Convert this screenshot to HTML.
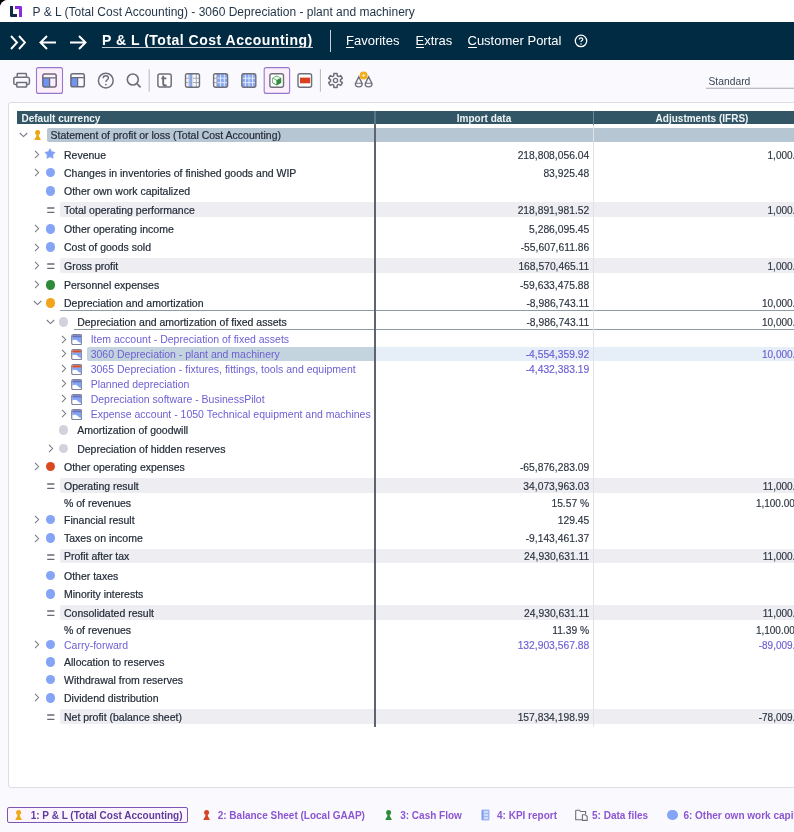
<!DOCTYPE html>
<html><head><meta charset="utf-8">
<style>
*{margin:0;padding:0;box-sizing:border-box}
html,body{width:794px;height:832px;overflow:hidden;background:#000}
body{font-family:"Liberation Sans",sans-serif;position:relative}
.abs{position:absolute}
#win{will-change:transform;position:absolute;left:0;top:0;width:794px;height:832px;background:#fafafe;border-top-left-radius:8px;overflow:hidden}
#titlebar{position:absolute;left:0;top:0;width:794px;height:22px;background:#fff}
#title{position:absolute;left:32.6px;top:5px;font-size:12px;color:#1f3347;white-space:nowrap;line-height:14px}
#nav{position:absolute;left:0;top:22px;width:794px;height:38px;background:#012a43}
.navt{position:absolute;color:#fff;white-space:nowrap;font-size:13px;line-height:15px;top:33px}
#card{position:absolute;left:8px;top:101.8px;width:800px;height:686.5px;background:#fff;border:1px solid #dddbe4;border-radius:3px}
.t{position:absolute;white-space:nowrap;font-size:10.5px;line-height:12px;color:#2f3744;-webkit-text-stroke:0.2px currentColor}
.n{position:absolute;white-space:nowrap;font-size:10.3px;line-height:12px;color:#3a424e;text-align:right;-webkit-text-stroke:0.15px currentColor}
.tab{position:absolute;white-space:nowrap;font-size:10px;font-weight:bold;line-height:12px;color:#8c56d2;top:810px}
.ico{position:absolute}
</style></head><body>
<div id="win">
 <div id="titlebar">
  <svg class="abs" style="left:10px;top:6px" width="12" height="11" viewBox="0 0 12 11">
   <path d="M0 0h3v8h4v3H1.2Q0 11 0 9.8Z" fill="#102a43"/>
   <path d="M5 0h5.8Q12 0 12 1.2V11H9V3H5Z" fill="#8a2be2"/>
  </svg>
  <div id="title">P &amp; L (Total Cost Accounting) - 3060 Depreciation - plant and machinery</div>
 </div>
 <div id="nav"></div>
 <!-- nav icons -->
 <svg class="abs" style="left:10px;top:34.5px" width="16" height="15" viewBox="0 0 16 15">
  <path d="M1 1L7 7.5L1 14M9 1L15 7.5L9 14" fill="none" stroke="#fff" stroke-width="1.9"/>
 </svg>
 <svg class="abs" style="left:39px;top:34.5px" width="17" height="15" viewBox="0 0 17 15">
  <path d="M8 1L1.5 7.5L8 14M1.5 7.5H17" fill="none" stroke="#fff" stroke-width="2"/>
 </svg>
 <svg class="abs" style="left:70px;top:34.5px" width="17" height="15" viewBox="0 0 17 15">
  <path d="M9 1L15.5 7.5L9 14M15.5 7.5H0" fill="none" stroke="#fff" stroke-width="2"/>
 </svg>
 <div class="navt" style="left:102px;top:32px;font-size:14px;font-weight:bold;letter-spacing:0.5px;line-height:16px">P &amp; L (Total Cost Accounting)</div>
 <div class="abs" style="left:102px;top:47px;width:211px;height:1.3px;background:#c5ccd4"></div>
 <div class="abs" style="left:330px;top:30px;width:1px;height:22px;background:#c8ced6"></div>
 <div class="navt" style="left:346px">Favorites</div>
 <div class="abs" style="left:346px;top:46.5px;width:8px;height:1px;background:#fff"></div>
 <div class="navt" style="left:415.5px">Extras</div>
 <div class="abs" style="left:415.5px;top:46.5px;width:8px;height:1px;background:#fff"></div>
 <div class="navt" style="left:467.5px">Customer Portal</div>
 <div class="abs" style="left:467.5px;top:46.5px;width:9px;height:1px;background:#fff"></div>
 <svg class="abs" style="left:573.5px;top:34px" width="14" height="14" viewBox="0 0 14 14">
  <circle cx="7" cy="6.9" r="5.7" fill="none" stroke="#fff" stroke-width="1.3"/>
  <path d="M5.2 5.5Q5.2 3.8 7 3.8Q8.8 3.8 8.8 5.3Q8.8 6.2 7.6 6.8Q7 7.1 7 8.1" fill="none" stroke="#fff" stroke-width="1.2"/>
  <circle cx="7" cy="9.9" r="0.75" fill="#fff"/>
 </svg>
  <!-- toolbar -->
 <svg class="abs" style="left:0;top:60px" width="794" height="42" viewBox="0 60 794 42">
  <g fill="none" stroke="#6f6f7c" stroke-width="1.5" stroke-linejoin="round">
   <!-- printer -->
   <path d="M17.2 76.8V74.2Q17.2 73.6 17.8 73.6H25.8Q26.4 73.6 26.4 74.2V76.8"/>
   <path d="M16.6 84.4H15.2Q13.8 84.4 13.8 83V79Q13.8 77.2 15.6 77.2H27.8Q29.4 77.2 29.4 79V83Q29.4 84.4 28 84.4H26.8"/>
   <path d="M16.8 82.4H26.6V86.4Q26.6 87.1 25.9 87.1H17.5Q16.8 87.1 16.8 86.4Z"/>
  </g>
  <!-- active box 1 -->
  <rect x="36.5" y="67.6" width="26" height="25.8" rx="2" fill="#fdeefb" stroke="#9479cf" stroke-width="1.1"/>
  <!-- layout icon 1 -->
  <rect x="43" y="78" width="6.5" height="9" fill="#6f95ef"/>
  <rect x="42.8" y="74.1" width="13.4" height="12.8" rx="1.8" fill="none" stroke="#6b6b7a" stroke-width="1.5"/>
  <path d="M42.8 77.8H56.2M49.6 77.8V86.9" stroke="#6b6b7a" stroke-width="1.3"/>
  <!-- layout icon 2 -->
  <rect x="71" y="78" width="6.5" height="9" fill="#6f95ef"/>
  <rect x="70.9" y="73.8" width="13.4" height="13" rx="1.8" fill="none" stroke="#6b6b7a" stroke-width="1.5"/>
  <path d="M70.9 77.6H84.3M77.6 77.6V86.8" stroke="#6b6b7a" stroke-width="1.3"/>
  <!-- help -->
  <circle cx="105.8" cy="80.6" r="7.4" fill="none" stroke="#6f6f7c" stroke-width="1.5"/>
  <path d="M103.2 78.3Q103.2 75.8 105.8 75.8Q108.4 75.8 108.4 78.1Q108.4 79.4 106.9 80.1Q105.9 80.6 105.9 82" fill="none" stroke="#6f6f7c" stroke-width="1.4"/>
  <circle cx="105.9" cy="84.6" r="0.9" fill="#6f6f7c"/>
  <!-- search -->
  <circle cx="132.8" cy="79.5" r="5.5" fill="none" stroke="#6f6f7c" stroke-width="1.6"/>
  <path d="M136.9 83.6L140.6 87.3" stroke="#6f6f7c" stroke-width="1.7"/>
  <!-- sep -->
  <path d="M149.2 69.2V91.7" stroke="#b4b4c0" stroke-width="1"/>
  <!-- t box -->
  <rect x="157.9" y="74.1" width="13.3" height="12.8" rx="1.8" fill="#fff" stroke="#6f6f7c" stroke-width="1.5"/>
  <path d="M163.2 75.8V83.6Q163.2 85.5 165 85.5Q166 85.5 166.6 85.2M161.3 78.4H166.4" fill="none" stroke="#6b6b7a" stroke-width="1.9"/>
  <!-- grid 1 -->
  <rect x="189" y="73.8" width="3.6" height="13.3" fill="#88a9f0"/>
  <!-- grid 2 -->
  <rect x="217" y="73.8" width="10.3" height="13.3" fill="#88a9f0"/>
  <!-- grid 3 -->
  <rect x="242" y="73.8" width="13.3" height="13.3" fill="#88a9f0"/>
  <g stroke-width="0.9">
   <path d="M188.9 74V87M192.6 74V87M196.3 74V87M185.5 78.2H199.5M185.5 82.6H199.5" stroke="#9a9aa6"/>
   <path d="M188.9 74V87M192.6 74V87" stroke="#e0e8fa"/>
   <path d="M220.6 74V87M224.3 74V87M217 78.2H227.5M217 82.6H227.5" stroke="#e8eefc"/>
   <path d="M216.9 74V87M213.5 78.2H216.9M213.5 82.6H216.9" stroke="#9a9aa6"/>
   <path d="M245.4 74V87M249 74V87M252.6 74V87M242 78.2H255.5M242 82.6H255.5" stroke="#e8eefc"/>
  </g>
  <rect x="185.5" y="73.8" width="14" height="13.4" rx="2" fill="none" stroke="#6f6f7c" stroke-width="1.4"/>
  <rect x="213.6" y="73.8" width="14" height="13.4" rx="2" fill="none" stroke="#6f6f7c" stroke-width="1.4"/>
  <rect x="241.8" y="73.8" width="14" height="13.4" rx="2" fill="none" stroke="#6f6f7c" stroke-width="1.4"/>
  <!-- active box 2 -->
  <rect x="264.2" y="67.6" width="25.4" height="25.8" rx="2" fill="#fdeefb" stroke="#9479cf" stroke-width="1.1"/>
  <rect x="269.9" y="73.8" width="13.6" height="13.4" rx="2" fill="#fff" stroke="#6f6f7c" stroke-width="1.4"/>
  <!-- cube -->
  <path d="M276.7 75.6L281.2 78V83L276.7 85.4L272.3 83V78Z" fill="#2f8c3a"/>
  <path d="M272.9 78.6L276.4 80.4V84.4L272.9 82.5Z" fill="#fff"/>
  <path d="M273 78.1L276.7 76.2L280.5 78.1L276.7 80Z" fill="#eaf6ea"/>
  <!-- red bar icon -->
  <rect x="298" y="73.8" width="13.6" height="13.4" rx="2" fill="#fff" stroke="#6f6f7c" stroke-width="1.4"/>
  <rect x="300" y="77.6" width="10.2" height="5.7" fill="#da3f1f"/>
  <!-- sep -->
  <path d="M320.4 69.2V91.7" stroke="#b4b4c0" stroke-width="1"/>
  <!-- gear -->
  <path d="M333.71 75.83 L333.88 73.48 L337.12 73.48 L337.29 75.83 L338.65 76.61 L340.77 75.59 L342.39 78.39 L340.44 79.72 L340.44 81.28 L342.39 82.61 L340.77 85.41 L338.65 84.39 L337.29 85.17 L337.12 87.52 L333.88 87.52 L333.71 85.17 L332.35 84.39 L330.23 85.41 L328.61 82.61 L330.56 81.28 L330.56 79.72 L328.61 78.39 L330.23 75.59 L332.35 76.61Z" fill="none" stroke="#6f6f7c" stroke-width="1.5" stroke-linejoin="round"/>
  <circle cx="335.5" cy="80.5" r="2.1" fill="none" stroke="#6f6f7c" stroke-width="1.3"/>
  <!-- balance -->
  <g fill="none" stroke="#6f6f7c" stroke-width="1.4">
   <path d="M358.8 76.8L355.4 83.6Q355.2 86.9 358.8 86.9Q362.3 86.9 362.2 83.6Z"/>
   <path d="M368.6 76.8L365.2 83.6Q365 86.9 368.6 86.9Q372.1 86.9 372 83.6Z"/>
   <path d="M355.6 83.3H362M365.4 83.3H371.8" stroke-width="1.1"/>
  </g>
  <circle cx="363.6" cy="75.4" r="4" fill="#f0ad1c"/>
  <path d="M362 75.4H365.2M363.6 73.8V77" stroke="#fff3c8" stroke-width="0.9"/>
  <!-- standard -->
  <text x="708.5" y="84.6" font-family="Liberation Sans" font-size="10.3" fill="#3c4656">Standard</text>
  <path d="M706 88.3H794" stroke="#a8a8b2" stroke-width="1.1"/>
 </svg>

 <div id="card"></div>
 <div class="abs" style="left:17px;top:111px;width:790px;height:13px;background:#325666"></div>
 <div class="abs" style="left:21.5px;top:113.2px;font-size:10px;font-weight:bold;color:#eef3f6;line-height:12px;white-space:nowrap">Default currency</div>
 <div class="abs" style="left:375px;top:113.2px;width:218px;text-align:center;font-size:10px;font-weight:bold;color:#eef3f6;line-height:12px;white-space:nowrap">Import data</div>
 <div class="abs" style="left:593px;top:113.2px;width:218px;text-align:center;font-size:10px;font-weight:bold;color:#eef3f6;line-height:12px;white-space:nowrap">Adjustments (IFRS)</div>
 <div class="abs" style="left:47.0px;top:128px;width:328.0px;height:14px;background:#b6c6d3;border-radius:2px 0 0 2px"></div>
<div class="abs" style="left:375.0px;top:128px;width:440px;height:14px;background:#b6c6d3"></div>
<svg class="abs" style="left:19.2px;top:132.3px" width="9" height="6" viewBox="0 0 9 6"><path d="M0.8 1L4.5 4.6L8.2 1" fill="none" stroke="#767984" stroke-width="1.05"/></svg>
<svg class="abs" style="left:33.6px;top:129.7px" width="8" height="11" viewBox="0 0 8 11"><circle cx="3.6" cy="2.6" r="2.5" fill="#f0a514"/><path d="M2.6 4.2L2.1 6.8Q0.5 8.4 0.4 10.1H6.8Q6.7 8.4 5.1 6.8L4.6 4.2Z" fill="#f0a514"/></svg>
<div class="t" style="left:50.5px;top:129.4px;color:#232c38">Statement of profit or loss (Total Cost Accounting)</div>
<svg class="abs" style="left:34.2px;top:150.1px" width="6" height="9" viewBox="0 0 6 9"><path d="M1 0.8L4.6 4.5L1 8.2" fill="none" stroke="#767984" stroke-width="1.05"/></svg>
<svg class="abs" style="left:44.3px;top:147.6px" width="12" height="12" viewBox="0 0 12 12"><path d="M6.00 0.70 L7.68 3.69 L11.04 4.36 L8.71 6.88 L9.12 10.29 L6.00 8.85 L2.88 10.29 L3.29 6.88 L0.96 4.36 L4.32 3.69Z" fill="#809ff4" stroke="#809ff4" stroke-width="0.7" stroke-linejoin="round"/></svg>
<div class="t" style="left:64.0px;top:149.4px;color:#232c38">Revenue</div>
<div class="n" style="right:204.8px;top:150.1px;color:#2c3440">218,808,056.04</div>
<div class="n" style="right:-12.5px;top:150.1px;color:#2c3440;font-size:10px">1,000.00</div>
<svg class="abs" style="left:34.2px;top:168.1px" width="6" height="9" viewBox="0 0 6 9"><path d="M1 0.8L4.6 4.5L1 8.2" fill="none" stroke="#767984" stroke-width="1.05"/></svg>
<div class="abs" style="left:45.5px;top:167.8px;width:9.6px;height:9.6px;border-radius:50%;background:#84a4f5"></div>
<div class="t" style="left:64.0px;top:167.4px;color:#232c38">Changes in inventories of finished goods and WIP</div>
<div class="n" style="right:204.8px;top:168.1px;color:#2c3440">83,925.48</div>
<div class="abs" style="left:45.5px;top:186.0px;width:9.6px;height:9.6px;border-radius:50%;background:#84a4f5"></div>
<div class="t" style="left:64.0px;top:185.4px;color:#232c38">Other own work capitalized</div>
<div class="abs" style="left:60.4px;top:202.0px;width:739.6px;height:14.5px;background:#ededf2;border-radius:2px 0 0 2px"></div>
<svg class="abs" style="left:46.7px;top:206.8px" width="8" height="7" viewBox="0 0 8 7"><path d="M0.2 1h7.2M0.2 5.3h7.2" stroke="#686877" stroke-width="1.3"/></svg>
<div class="t" style="left:64.0px;top:204.4px;color:#232c38">Total operating performance</div>
<div class="n" style="right:204.8px;top:205.1px;color:#2c3440">218,891,981.52</div>
<div class="n" style="right:-12.5px;top:205.1px;color:#2c3440;font-size:10px">1,000.00</div>
<svg class="abs" style="left:34.2px;top:224.3px" width="6" height="9" viewBox="0 0 6 9"><path d="M1 0.8L4.6 4.5L1 8.2" fill="none" stroke="#767984" stroke-width="1.05"/></svg>
<div class="abs" style="left:45.5px;top:224.0px;width:9.6px;height:9.6px;border-radius:50%;background:#84a4f5"></div>
<div class="t" style="left:64.0px;top:223.4px;color:#232c38">Other operating income</div>
<div class="n" style="right:204.8px;top:224.1px;color:#2c3440">5,286,095.45</div>
<svg class="abs" style="left:34.2px;top:242.6px" width="6" height="9" viewBox="0 0 6 9"><path d="M1 0.8L4.6 4.5L1 8.2" fill="none" stroke="#767984" stroke-width="1.05"/></svg>
<div class="abs" style="left:45.5px;top:242.3px;width:9.6px;height:9.6px;border-radius:50%;background:#84a4f5"></div>
<div class="t" style="left:64.0px;top:241.4px;color:#232c38">Cost of goods sold</div>
<div class="n" style="right:204.8px;top:242.1px;color:#2c3440">-55,607,611.86</div>
<div class="abs" style="left:60.4px;top:258.2px;width:739.6px;height:14.5px;background:#ededf2;border-radius:2px 0 0 2px"></div>
<svg class="abs" style="left:34.2px;top:261.1px" width="6" height="9" viewBox="0 0 6 9"><path d="M1 0.8L4.6 4.5L1 8.2" fill="none" stroke="#767984" stroke-width="1.05"/></svg>
<svg class="abs" style="left:46.7px;top:263.0px" width="8" height="7" viewBox="0 0 8 7"><path d="M0.2 1h7.2M0.2 5.3h7.2" stroke="#686877" stroke-width="1.3"/></svg>
<div class="t" style="left:64.0px;top:260.4px;color:#232c38">Gross profit</div>
<div class="n" style="right:204.8px;top:261.1px;color:#2c3440">168,570,465.11</div>
<div class="n" style="right:-12.5px;top:261.1px;color:#2c3440;font-size:10px">1,000.00</div>
<svg class="abs" style="left:34.2px;top:280.4px" width="6" height="9" viewBox="0 0 6 9"><path d="M1 0.8L4.6 4.5L1 8.2" fill="none" stroke="#767984" stroke-width="1.05"/></svg>
<div class="abs" style="left:45.5px;top:280.1px;width:9.6px;height:9.6px;border-radius:50%;background:#2e8b3a"></div>
<div class="t" style="left:64.0px;top:279.4px;color:#232c38">Personnel expenses</div>
<div class="n" style="right:204.8px;top:280.1px;color:#2c3440">-59,633,475.88</div>
<div class="abs" style="left:60.4px;top:310.2px;width:739.6px;height:1.2px;background:#8d9ca3"></div>
<svg class="abs" style="left:32.5px;top:299.9px" width="9" height="6" viewBox="0 0 9 6"><path d="M0.8 1L4.5 4.6L8.2 1" fill="none" stroke="#767984" stroke-width="1.05"/></svg>
<div class="abs" style="left:45.5px;top:298.1px;width:9.6px;height:9.6px;border-radius:50%;background:#f2a51c"></div>
<div class="t" style="left:64.0px;top:297.4px;color:#232c38">Depreciation and amortization</div>
<div class="n" style="right:204.8px;top:298.1px;color:#2c3440">-8,986,743.11</div>
<div class="n" style="right:-12.5px;top:298.1px;color:#2c3440;font-size:10px">10,000.00</div>
<div class="abs" style="left:73.5px;top:329.3px;width:726.5px;height:1.2px;background:#8d9ca3"></div>
<svg class="abs" style="left:45.8px;top:319.0px" width="9" height="6" viewBox="0 0 9 6"><path d="M0.8 1L4.5 4.6L8.2 1" fill="none" stroke="#767984" stroke-width="1.05"/></svg>
<div class="abs" style="left:58.9px;top:317.2px;width:9.6px;height:9.6px;border-radius:50%;background:#d3d2dc"></div>
<div class="t" style="left:77.2px;top:316.4px;color:#232c38">Depreciation and amortization of fixed assets</div>
<div class="n" style="right:204.8px;top:317.1px;color:#2c3440">-8,986,743.11</div>
<div class="n" style="right:-12.5px;top:317.1px;color:#2c3440;font-size:10px">10,000.00</div>
<svg class="abs" style="left:60.9px;top:334.5px" width="6" height="9" viewBox="0 0 6 9"><path d="M1 0.8L4.6 4.5L1 8.2" fill="none" stroke="#767984" stroke-width="1.05"/></svg>
<svg class="abs" style="left:71.1px;top:334.0px" width="11.4" height="11.2" viewBox="0 0 11.4 11.2"><rect x="0.7" y="0.7" width="10" height="9.9" rx="1.6" fill="#fff" stroke="#80829a" stroke-width="1.2"/><path d="M1.3 3.3H10.1V9Q8.4 8.8 6.9 7.2Q5 4.9 1.3 6.3Z" fill="#82a4f4"/><path d="M1.3 3.6V2.3Q1.3 1.3 2.3 1.3H9.1Q10.1 1.3 10.1 2.3V3.6Z" fill="#6470c0"/></svg>
<div class="t" style="left:90.7px;top:333.4px;color:#6c5fd4;-webkit-text-stroke:0">Item account - Depreciation of fixed assets</div>
<div class="abs" style="left:87.0px;top:347.2px;width:288.0px;height:14px;background:#c4d4de;border-radius:2px 0 0 2px"></div>
<div class="abs" style="left:375.0px;top:347.2px;width:440px;height:14px;background:#e6eef7"></div>
<svg class="abs" style="left:60.9px;top:349.3px" width="6" height="9" viewBox="0 0 6 9"><path d="M1 0.8L4.6 4.5L1 8.2" fill="none" stroke="#767984" stroke-width="1.05"/></svg>
<svg class="abs" style="left:71.1px;top:348.8px" width="11.4" height="11.2" viewBox="0 0 11.4 11.2"><rect x="0.7" y="0.7" width="10" height="9.9" rx="1.6" fill="#fff" stroke="#80829a" stroke-width="1.2"/><path d="M1.3 3.3H10.1V9Q8.4 8.8 6.9 7.2Q5 4.9 1.3 6.3Z" fill="#82a4f4"/><path d="M1.3 3.6V2.3Q1.3 1.3 2.3 1.3H9.1Q10.1 1.3 10.1 2.3V3.6Z" fill="#d4502e"/></svg>
<div class="t" style="left:90.7px;top:348.4px;color:#6c5fd4;-webkit-text-stroke:0">3060 Depreciation - plant and machinery</div>
<div class="n" style="right:204.8px;top:349.1px;color:#6c5fd4">-4,554,359.92</div>
<div class="n" style="right:-12.5px;top:349.1px;color:#6c5fd4;font-size:10px">10,000.00</div>
<svg class="abs" style="left:60.9px;top:364.1px" width="6" height="9" viewBox="0 0 6 9"><path d="M1 0.8L4.6 4.5L1 8.2" fill="none" stroke="#767984" stroke-width="1.05"/></svg>
<svg class="abs" style="left:71.1px;top:363.6px" width="11.4" height="11.2" viewBox="0 0 11.4 11.2"><rect x="0.7" y="0.7" width="10" height="9.9" rx="1.6" fill="#fff" stroke="#80829a" stroke-width="1.2"/><path d="M1.3 3.3H10.1V9Q8.4 8.8 6.9 7.2Q5 4.9 1.3 6.3Z" fill="#82a4f4"/><path d="M1.3 3.6V2.3Q1.3 1.3 2.3 1.3H9.1Q10.1 1.3 10.1 2.3V3.6Z" fill="#d4502e"/></svg>
<div class="t" style="left:90.7px;top:363.4px;color:#6c5fd4;-webkit-text-stroke:0">3065 Depreciation - fixtures, fittings, tools and equipment</div>
<div class="n" style="right:204.8px;top:364.1px;color:#6c5fd4">-4,432,383.19</div>
<svg class="abs" style="left:60.9px;top:379.2px" width="6" height="9" viewBox="0 0 6 9"><path d="M1 0.8L4.6 4.5L1 8.2" fill="none" stroke="#767984" stroke-width="1.05"/></svg>
<svg class="abs" style="left:71.1px;top:378.7px" width="11.4" height="11.2" viewBox="0 0 11.4 11.2"><rect x="0.7" y="0.7" width="10" height="9.9" rx="1.6" fill="#fff" stroke="#80829a" stroke-width="1.2"/><path d="M1.3 3.3H10.1V9Q8.4 8.8 6.9 7.2Q5 4.9 1.3 6.3Z" fill="#82a4f4"/><path d="M1.3 3.6V2.3Q1.3 1.3 2.3 1.3H9.1Q10.1 1.3 10.1 2.3V3.6Z" fill="#6470c0"/></svg>
<div class="t" style="left:90.7px;top:378.4px;color:#6c5fd4;-webkit-text-stroke:0">Planned depreciation</div>
<svg class="abs" style="left:60.9px;top:394.1px" width="6" height="9" viewBox="0 0 6 9"><path d="M1 0.8L4.6 4.5L1 8.2" fill="none" stroke="#767984" stroke-width="1.05"/></svg>
<svg class="abs" style="left:71.1px;top:393.6px" width="11.4" height="11.2" viewBox="0 0 11.4 11.2"><rect x="0.7" y="0.7" width="10" height="9.9" rx="1.6" fill="#fff" stroke="#80829a" stroke-width="1.2"/><path d="M1.3 3.3H10.1V9Q8.4 8.8 6.9 7.2Q5 4.9 1.3 6.3Z" fill="#82a4f4"/><path d="M1.3 3.6V2.3Q1.3 1.3 2.3 1.3H9.1Q10.1 1.3 10.1 2.3V3.6Z" fill="#6470c0"/></svg>
<div class="t" style="left:90.7px;top:393.4px;color:#6c5fd4;-webkit-text-stroke:0">Depreciation software - BusinessPilot</div>
<svg class="abs" style="left:60.9px;top:409.1px" width="6" height="9" viewBox="0 0 6 9"><path d="M1 0.8L4.6 4.5L1 8.2" fill="none" stroke="#767984" stroke-width="1.05"/></svg>
<svg class="abs" style="left:71.1px;top:408.6px" width="11.4" height="11.2" viewBox="0 0 11.4 11.2"><rect x="0.7" y="0.7" width="10" height="9.9" rx="1.6" fill="#fff" stroke="#80829a" stroke-width="1.2"/><path d="M1.3 3.3H10.1V9Q8.4 8.8 6.9 7.2Q5 4.9 1.3 6.3Z" fill="#82a4f4"/><path d="M1.3 3.6V2.3Q1.3 1.3 2.3 1.3H9.1Q10.1 1.3 10.1 2.3V3.6Z" fill="#6470c0"/></svg>
<div class="t" style="left:90.7px;top:408.4px;color:#6c5fd4;-webkit-text-stroke:0">Expense account - 1050 Technical equipment and machines</div>
<div class="abs" style="left:58.9px;top:425.4px;width:9.6px;height:9.6px;border-radius:50%;background:#d3d2dc"></div>
<div class="t" style="left:77.2px;top:424.4px;color:#232c38">Amortization of goodwill</div>
<svg class="abs" style="left:47.5px;top:444.0px" width="6" height="9" viewBox="0 0 6 9"><path d="M1 0.8L4.6 4.5L1 8.2" fill="none" stroke="#767984" stroke-width="1.05"/></svg>
<div class="abs" style="left:58.9px;top:443.7px;width:9.6px;height:9.6px;border-radius:50%;background:#d3d2dc"></div>
<div class="t" style="left:77.2px;top:443.4px;color:#232c38">Depreciation of hidden reserves</div>
<svg class="abs" style="left:34.2px;top:462.0px" width="6" height="9" viewBox="0 0 6 9"><path d="M1 0.8L4.6 4.5L1 8.2" fill="none" stroke="#767984" stroke-width="1.05"/></svg>
<div class="abs" style="left:45.5px;top:461.7px;width:9.6px;height:9.6px;border-radius:50%;background:#d9481f"></div>
<div class="t" style="left:64.0px;top:461.4px;color:#232c38">Other operating expenses</div>
<div class="n" style="right:204.8px;top:462.1px;color:#2c3440">-65,876,283.09</div>
<div class="abs" style="left:60.4px;top:478.3px;width:739.6px;height:14.5px;background:#ededf2;border-radius:2px 0 0 2px"></div>
<svg class="abs" style="left:46.7px;top:483.1px" width="8" height="7" viewBox="0 0 8 7"><path d="M0.2 1h7.2M0.2 5.3h7.2" stroke="#686877" stroke-width="1.3"/></svg>
<div class="t" style="left:64.0px;top:480.4px;color:#232c38">Operating result</div>
<div class="n" style="right:204.8px;top:481.1px;color:#2c3440">34,073,963.03</div>
<div class="n" style="right:-12.5px;top:481.1px;color:#2c3440;font-size:10px">11,000.00</div>
<div class="t" style="left:64.0px;top:497.4px;color:#232c38">% of revenues</div>
<div class="n" style="right:204.8px;top:498.1px;color:#2c3440">15.57 %</div>
<div class="n" style="right:-12.5px;top:498.1px;color:#2c3440;font-size:10px">1,100.00 %</div>
<svg class="abs" style="left:34.2px;top:515.2px" width="6" height="9" viewBox="0 0 6 9"><path d="M1 0.8L4.6 4.5L1 8.2" fill="none" stroke="#767984" stroke-width="1.05"/></svg>
<div class="abs" style="left:45.5px;top:514.9px;width:9.6px;height:9.6px;border-radius:50%;background:#84a4f5"></div>
<div class="t" style="left:64.0px;top:514.4px;color:#232c38">Financial result</div>
<div class="n" style="right:204.8px;top:515.1px;color:#2c3440">129.45</div>
<svg class="abs" style="left:34.2px;top:533.5px" width="6" height="9" viewBox="0 0 6 9"><path d="M1 0.8L4.6 4.5L1 8.2" fill="none" stroke="#767984" stroke-width="1.05"/></svg>
<div class="abs" style="left:45.5px;top:533.2px;width:9.6px;height:9.6px;border-radius:50%;background:#84a4f5"></div>
<div class="t" style="left:64.0px;top:532.4px;color:#232c38">Taxes on income</div>
<div class="n" style="right:204.8px;top:533.1px;color:#2c3440">-9,143,461.37</div>
<div class="abs" style="left:60.4px;top:548.8px;width:739.6px;height:14.5px;background:#ededf2;border-radius:2px 0 0 2px"></div>
<svg class="abs" style="left:46.7px;top:553.6px" width="8" height="7" viewBox="0 0 8 7"><path d="M0.2 1h7.2M0.2 5.3h7.2" stroke="#686877" stroke-width="1.3"/></svg>
<div class="t" style="left:64.0px;top:550.4px;color:#232c38">Profit after tax</div>
<div class="n" style="right:204.8px;top:551.1px;color:#2c3440">24,930,631.11</div>
<div class="n" style="right:-12.5px;top:551.1px;color:#2c3440;font-size:10px">11,000.00</div>
<div class="abs" style="left:45.5px;top:570.9px;width:9.6px;height:9.6px;border-radius:50%;background:#84a4f5"></div>
<div class="t" style="left:64.0px;top:570.4px;color:#232c38">Other taxes</div>
<div class="abs" style="left:45.5px;top:589.2px;width:9.6px;height:9.6px;border-radius:50%;background:#84a4f5"></div>
<div class="t" style="left:64.0px;top:588.4px;color:#232c38">Minority interests</div>
<div class="abs" style="left:60.4px;top:605.2px;width:739.6px;height:14.5px;background:#ededf2;border-radius:2px 0 0 2px"></div>
<svg class="abs" style="left:46.7px;top:610.0px" width="8" height="7" viewBox="0 0 8 7"><path d="M0.2 1h7.2M0.2 5.3h7.2" stroke="#686877" stroke-width="1.3"/></svg>
<div class="t" style="left:64.0px;top:607.4px;color:#232c38">Consolidated result</div>
<div class="n" style="right:204.8px;top:608.1px;color:#2c3440">24,930,631.11</div>
<div class="n" style="right:-12.5px;top:608.1px;color:#2c3440;font-size:10px">11,000.00</div>
<div class="t" style="left:64.0px;top:624.4px;color:#232c38">% of revenues</div>
<div class="n" style="right:204.8px;top:625.1px;color:#2c3440">11.39 %</div>
<div class="n" style="right:-12.5px;top:625.1px;color:#2c3440;font-size:10px">1,100.00 %</div>
<svg class="abs" style="left:34.2px;top:640.2px" width="6" height="9" viewBox="0 0 6 9"><path d="M1 0.8L4.6 4.5L1 8.2" fill="none" stroke="#767984" stroke-width="1.05"/></svg>
<div class="abs" style="left:45.5px;top:639.9px;width:9.6px;height:9.6px;border-radius:50%;background:#84a4f5"></div>
<div class="t" style="left:64.0px;top:639.4px;color:#6c5fd4;-webkit-text-stroke:0">Carry-forward</div>
<div class="n" style="right:204.8px;top:640.1px;color:#6c5fd4">132,903,567.88</div>
<div class="n" style="right:-12.5px;top:640.1px;color:#6c5fd4;font-size:10px">-89,009.00</div>
<div class="abs" style="left:45.5px;top:657.2px;width:9.6px;height:9.6px;border-radius:50%;background:#84a4f5"></div>
<div class="t" style="left:64.0px;top:656.4px;color:#232c38">Allocation to reserves</div>
<div class="abs" style="left:45.5px;top:674.8px;width:9.6px;height:9.6px;border-radius:50%;background:#84a4f5"></div>
<div class="t" style="left:64.0px;top:674.4px;color:#232c38">Withdrawal from reserves</div>
<svg class="abs" style="left:34.2px;top:693.4px" width="6" height="9" viewBox="0 0 6 9"><path d="M1 0.8L4.6 4.5L1 8.2" fill="none" stroke="#767984" stroke-width="1.05"/></svg>
<div class="abs" style="left:45.5px;top:693.1px;width:9.6px;height:9.6px;border-radius:50%;background:#84a4f5"></div>
<div class="t" style="left:64.0px;top:692.4px;color:#232c38">Dividend distribution</div>
<div class="abs" style="left:60.4px;top:709.4px;width:739.6px;height:14.5px;background:#ededf2;border-radius:2px 0 0 2px"></div>
<svg class="abs" style="left:46.7px;top:714.2px" width="8" height="7" viewBox="0 0 8 7"><path d="M0.2 1h7.2M0.2 5.3h7.2" stroke="#686877" stroke-width="1.3"/></svg>
<div class="t" style="left:64.0px;top:711.4px;color:#232c38">Net profit (balance sheet)</div>
<div class="n" style="right:204.8px;top:712.1px;color:#2c3440">157,834,198.99</div>
<div class="n" style="right:-12.5px;top:712.1px;color:#2c3440;font-size:10px">-78,009.00</div>
<div class="abs" style="left:374.25px;top:111px;width:1.5px;height:13.5px;background:#587786"></div>
<div class="abs" style="left:592.5px;top:111px;width:1px;height:13.5px;background:#6a8896"></div>
<div class="abs" style="left:374.25px;top:124.5px;width:1.6px;height:602px;background:#5d646e"></div>
<div class="abs" style="left:592.5px;top:124.5px;width:1px;height:602px;background:#e1e1e8"></div>

  <!-- tabs -->
 <div class="abs" style="left:7px;top:807.2px;width:181px;height:15.6px;border:1.1px solid #7d55b4;border-radius:2px;background:#fdf5fd"></div>
 <svg class="abs" style="left:15px;top:809.6px" width="8" height="11" viewBox="0 0 8 11"><circle cx="3.6" cy="2.6" r="2.5" fill="#f0a818"/><path d="M2.6 4.2L2.1 6.8Q0.5 8.4 0.4 10.1H6.8Q6.7 8.4 5.1 6.8L4.6 4.2Z" fill="#f0a818"/></svg>
 <div class="tab" style="left:30.7px;color:#5f3b9c">1: P &amp; L (Total Cost Accounting)</div>
 <svg class="abs" style="left:202.5px;top:809.6px" width="8" height="11" viewBox="0 0 8 11"><circle cx="3.6" cy="2.6" r="2.5" fill="#d6442a"/><path d="M2.6 4.2L2.1 6.8Q0.5 8.4 0.4 10.1H6.8Q6.7 8.4 5.1 6.8L4.6 4.2Z" fill="#d6442a"/></svg>
 <div class="tab" style="left:217.7px">2: Balance Sheet (Local GAAP)</div>
 <svg class="abs" style="left:385px;top:809.6px" width="8" height="11" viewBox="0 0 8 11"><circle cx="3.6" cy="2.6" r="2.5" fill="#2e8b3a"/><path d="M2.6 4.2L2.1 6.8Q0.5 8.4 0.4 10.1H6.8Q6.7 8.4 5.1 6.8L4.6 4.2Z" fill="#2e8b3a"/></svg>
 <div class="tab" style="left:400.2px">3: Cash Flow</div>
 <svg class="abs" style="left:481px;top:809px" width="9" height="12" viewBox="0 0 9 12"><rect x="0.5" y="0.5" width="8" height="11" rx="1" fill="#9fb8f4"/><path d="M3 3h4M3 6h4M3 9h4" stroke="#fff" stroke-width="1"/><path d="M1.5 1v10" stroke="#7f9ef0" stroke-width="1.5"/></svg>
 <div class="tab" style="left:497px">4: KPI report</div>
 <svg class="abs" style="left:575px;top:809px" width="13" height="12" viewBox="0 0 13 12"><path d="M0.7 1.2H4.5L5.6 2.5H10.6V5M7 10.8H0.7V1.2" fill="none" stroke="#6f6f7c" stroke-width="1.1"/><path d="M7.4 5.8H10.4L12.2 7.6V11.4H7.4Z" fill="none" stroke="#6f6f7c" stroke-width="1.1"/></svg>
 <div class="tab" style="left:592px">5: Data files</div>
 <div class="abs" style="left:667.3px;top:809.7px;width:10.5px;height:10.5px;border-radius:50%;background:#84a4f5"></div>
 <div class="tab" style="left:683.4px">6: Other own work capitalized</div>

</div>
</body></html>
